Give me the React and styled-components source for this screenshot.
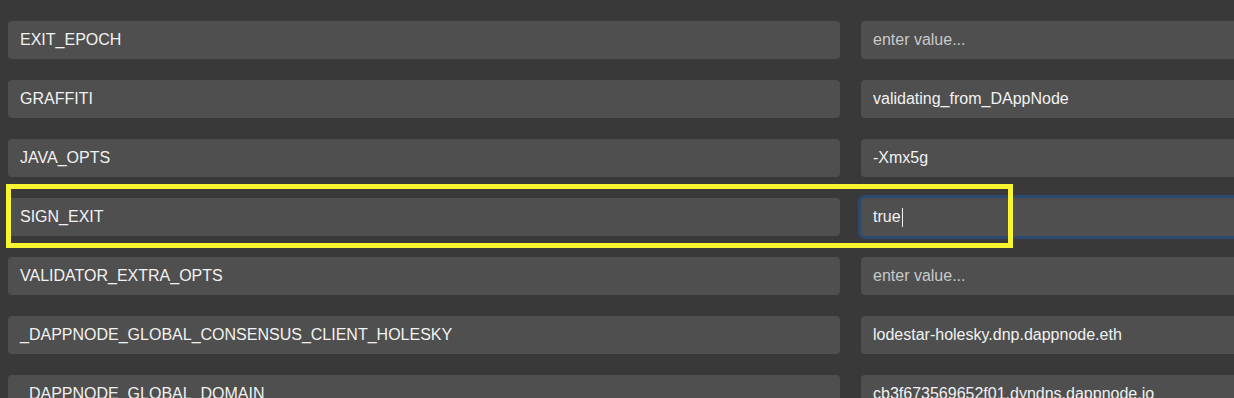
import React from "react";
import styled, { createGlobalStyle } from "styled-components";

const GlobalStyle = createGlobalStyle`
  html, body {
    margin: 0;
    padding: 0;
    background: #393939;
    overflow: hidden;
  }
  body {
    font-family: "Liberation Sans", Arial, sans-serif;
  }
`;

const rows = [
  { name: "EXIT_EPOCH", value: "" },
  { name: "GRAFFITI", value: "validating_from_DAppNode" },
  { name: "JAVA_OPTS", value: "-Xmx5g" },
  { name: "SIGN_EXIT", value: "true", focused: true },
  { name: "VALIDATOR_EXTRA_OPTS", value: "" },
  { name: "_DAPPNODE_GLOBAL_CONSENSUS_CLIENT_HOLESKY", value: "lodestar-holesky.dnp.dappnode.eth" },
  { name: "_DAPPNODE_GLOBAL_DOMAIN", value: "cb3f673569652f01.dyndns.dappnode.io" },
];

const App = () => {
  return (
    <Page>
      <GlobalStyle />
      <Table>
        {rows.map((r) => (
          <React.Fragment key={r.name}>
            <Label>{r.name}</Label>
            <Field $focused={r.focused} $empty={!r.value}>
              {r.value || "enter value..."}
              {r.focused && <Caret />}
            </Field>
          </React.Fragment>
        ))}
      </Table>
      <Highlight />
    </Page>
  );
};

const Page = styled.div`
  position: relative;
  width: 1234px;
  height: 398px;
  overflow: hidden;
  padding: 21px 0 0 8px;
  box-sizing: border-box;
`;

const Table = styled.div`
  display: grid;
  grid-template-columns: 832px 420px;
  column-gap: 21px;
  row-gap: 21px;
  grid-auto-rows: 38px;
`;

const Label = styled.div`
  display: flex;
  align-items: center;
  padding-left: 12px;
  background: #4f4f4f;
  border-radius: 4px;
  color: #f2f2f2;
  font-size: 16px;
`;

const Field = styled.div`
  display: flex;
  align-items: center;
  padding-left: 12px;
  background: #4f4f4f;
  border-radius: 4px;
  color: ${(p) => (p.$empty ? "#c9c9c9" : "#f2f2f2")};
  font-size: 16px;
  box-shadow: ${(p) => (p.$focused ? "0 0 0 3px #2b4a6f" : "none")};
`;

const Caret = styled.span`
  display: inline-block;
  width: 1px;
  height: 19px;
  margin-left: 1px;
  background: #f2f2f2;
`;

const Highlight = styled.div`
  position: absolute;
  left: 6px;
  top: 184px;
  width: 1007px;
  height: 64px;
  box-sizing: border-box;
  border: 5px solid #f8f431;
`;

export default App;
